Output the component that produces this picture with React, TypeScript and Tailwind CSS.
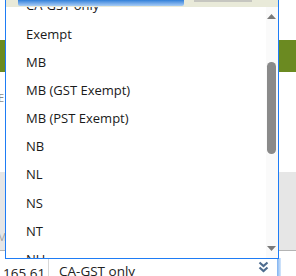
import React from "react";

const items = ["CA-GST only", "Exempt", "MB", "MB (GST Exempt)", "MB (PST Exempt)", "NB", "NL", "NS", "NT", "NU"];

export default function App() {
  return (
    <div className="relative w-[296px] h-[276px] overflow-hidden bg-white" style={{ fontFamily: "'Open Sans', 'DejaVu Sans', sans-serif" }}>
      {/* page behind the open list */}
      <div className="flex flex-col">
        <div className="h-[40px]" />
        <div className="h-[32px] bg-[#6b8a21]" />
        <div className="h-[100px] pt-[20px] text-[11px] text-[#8a8a8a] leading-none">
          <span className="ml-[-2px]">E</span>
        </div>
        <div className="h-[78px] bg-[#e6e6e6] flex flex-col justify-end pb-[8px] text-[11px] text-[#a0a0a0] leading-none">
          <span className="ml-[-3px]">M</span>
        </div>
        <div className="h-[1px] bg-[#b4b4b4]" />
        <div className="h-[25px] flex items-end">
          <div className="w-[48px] pl-[3px] text-[13.5px] leading-none text-[#222] translate-y-[4px]">165.61</div>
          <div className="w-[1px] h-[18px] bg-[#d8d8d8]" />
          <div className="relative ml-[6px] w-[222px] h-[18px] flex items-center">
            <span className="pl-[4px] text-[13.5px] leading-none text-[#222] translate-y-[5px]">CA-GST only</span>
            <svg className="absolute right-[8px] top-[3px]" width="11" height="12" viewBox="0 0 11 12">
              <path d="M1.5 1.5 L5.5 5 L9.5 1.5" stroke="#4f6d8f" strokeWidth="2.2" fill="none" />
              <path d="M1.5 6.5 L5.5 10 L9.5 6.5" stroke="#4f6d8f" strokeWidth="2.2" fill="none" />
            </svg>
            <div className="absolute right-[-4px] top-0 w-[4px] h-[18px] bg-gradient-to-r from-[#7fb2f0] to-[#d6e7fb]" />
          </div>
        </div>
      </div>

      {/* open dropdown list */}
      <div className="absolute left-[5px] top-0 w-[274px] h-[259px] bg-white border-l border-r border-b border-[#1e7cf5] overflow-hidden">
        <div className="mt-[-8px]">
          {items.map((t) => (
            <div key={t} className="h-[28.2px] flex items-center pl-[20px] text-[13px] text-[#1a1a1a]">
              {t}
            </div>
          ))}
        </div>

        {/* strip on top */}
        <div className="absolute left-0 right-0 top-0 h-[7px] bg-[#e9ead9]">
          <div className="absolute left-[12px] top-0 w-[166px] h-[6px] rounded-b-[2px] bg-gradient-to-b from-[#2f7fd8] to-[#a8cdf5]" />
          <div className="absolute left-[188px] top-0 w-[58px] h-[2px] bg-[#c6c6c0]" />
        </div>

        {/* scrollbar */}
        <div className="absolute right-0 top-[7px] bottom-0 w-[12px] bg-[#fafafa]">
          <svg className="absolute left-[1px] top-[7px]" width="9" height="5" viewBox="0 0 9 5">
            <path d="M0 5 L4.5 0 L9 5 Z" fill="#7a7a7a" />
          </svg>
          <div className="absolute left-[1px] top-[55px] w-[9px] h-[92px] rounded-full bg-[#8a8a8a]" />
          <svg className="absolute left-[1px] bottom-[7px]" width="9" height="5" viewBox="0 0 9 5">
            <path d="M0 0 L9 0 L4.5 5 Z" fill="#7a7a7a" />
          </svg>
        </div>
      </div>
    </div>
  );
}
